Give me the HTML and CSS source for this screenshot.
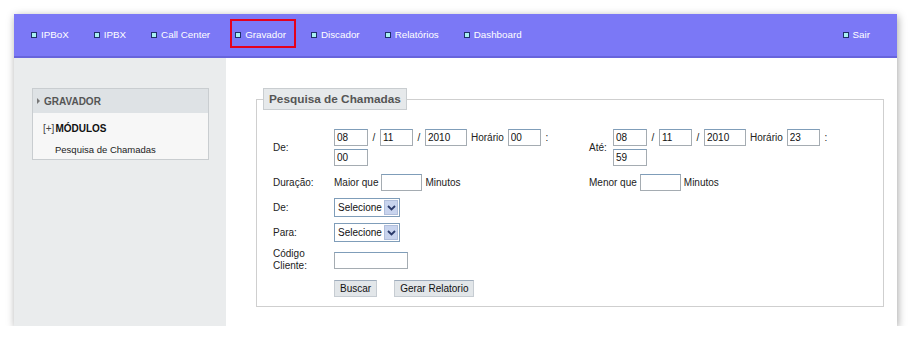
FILE: index.html
```html
<!DOCTYPE html>
<html lang="pt-BR">
<head>
    <meta charset="UTF-8">
    <link rel="stylesheet" href="styles.css">
</head>
<body>
    <div class="page">
        <div class="window">
            <nav class="topbar">
                <a class="nav-item"><span class="bullet"></span>IPBoX</a>
                <a class="nav-item"><span class="bullet"></span>IPBX</a>
                <a class="nav-item"><span class="bullet"></span>Call Center</a>
                <a class="nav-item active"><span class="bullet"></span>Gravador</a>
                <a class="nav-item"><span class="bullet"></span>Discador</a>
                <a class="nav-item"><span class="bullet"></span>Relatórios</a>
                <a class="nav-item"><span class="bullet"></span>Dashboard</a>
                <a class="nav-item nav-exit"><span class="bullet"></span>Sair</a>
            </nav>
            <div class="main">
                <aside class="sidebar">
                    <div class="side-box">
                        <div class="side-head"><span class="arrow"></span>GRAVADOR</div>
                        <div class="side-body">
                            <div class="side-group"><span class="plus">[+]</span>MÓDULOS</div>
                            <a class="side-link">Pesquisa de Chamadas</a>
                        </div>
                    </div>
                </aside>
                <section class="content">
                    <fieldset class="search">
                        <legend>Pesquisa de Chamadas</legend>

                        <div class="row row-date">
                            <div class="half">
                                <label class="lbl">De:</label>
                                <div class="fields">
                                    <input class="in w34" value="08"><span class="sep">/</span>
                                    <input class="in w32" value="11"><span class="sep">/</span>
                                    <input class="in w40" value="2010"><span class="txt">Horário</span>
                                    <input class="in w32" value="00"><span class="sep">:</span>
                                    <input class="in w34" value="00">
                                </div>
                            </div>
                            <div class="half half-right">
                                <label class="lbl lbl-short">Até:</label>
                                <div class="fields">
                                    <input class="in w34" value="08"><span class="sep">/</span>
                                    <input class="in w32" value="11"><span class="sep">/</span>
                                    <input class="in w40" value="2010"><span class="txt">Horário</span>
                                    <input class="in w32" value="23"><span class="sep">:</span>
                                    <input class="in w34" value="59">
                                </div>
                            </div>
                        </div>

                        <div class="row">
                            <div class="half">
                                <label class="lbl">Duração:</label>
                                <div class="fields fields-tight">
                                    <span class="txt">Maior que</span>
                                    <input class="in w41" value="">
                                    <span class="txt">Minutos</span>
                                </div>
                            </div>
                            <div class="half half-right">
                                <div class="fields fields-tight">
                                    <span class="txt">Menor que</span>
                                    <input class="in w41" value="">
                                    <span class="txt">Minutos</span>
                                </div>
                            </div>
                        </div>

                        <div class="row row-select">
                            <label class="lbl">De:</label>
                            <div class="select-wrap">
                                <select class="sel"><option>Selecione</option></select>
                                <span class="sel-btn">
                                    <svg width="9" height="6" viewBox="0 0 9 6"><path d="M1 1 L4.5 4.5 L8 1" fill="none" stroke="#2a3a6a" stroke-width="1.8"/></svg>
                                </span>
                            </div>
                        </div>

                        <div class="row row-select">
                            <label class="lbl">Para:</label>
                            <div class="select-wrap">
                                <select class="sel"><option>Selecione</option></select>
                                <span class="sel-btn">
                                    <svg width="9" height="6" viewBox="0 0 9 6"><path d="M1 1 L4.5 4.5 L8 1" fill="none" stroke="#2a3a6a" stroke-width="1.8"/></svg>
                                </span>
                            </div>
                        </div>

                        <div class="row row-code">
                            <label class="lbl lbl-wrap">Código Cliente:</label>
                            <input class="in w74" value="">
                        </div>

                        <div class="row row-buttons">
                            <button class="btn">Buscar</button>
                            <button class="btn">Gerar Relatorio</button>
                        </div>
                    </fieldset>
                </section>
            </div>
        </div>
    </div>
</body>
</html>
```

FILE: styles.css
```css
html, body {
    margin: 0;
    padding: 0;
    background: #ffffff;
    font-family: 'Liberation Sans', Arial, sans-serif;
    font-size: 10px;
    color: #222;
}

.page {
    padding: 14px 0 0 14px;
}

.window {
    width: 883px;
    height: 312px;
    display: flex;
    flex-direction: column;
    background: #fff;
    box-shadow: 1px 2px 8px rgba(0, 0, 0, 0.35);
}

/* barra superior */
.topbar {
    display: flex;
    align-items: flex-start;
    gap: 10px;
    height: 37px;
    flex-shrink: 0;
    padding: 5px 17px 0 12px;
    background: #7b78f6;
    border-bottom: 2px solid #6764dc;
}

.nav-item {
    display: flex;
    align-items: center;
    height: 23px;
    padding: 2px 8px 0 3px;
    border: 2px solid transparent;
    color: #fff;
    font-size: 9.8px;
    text-decoration: none;
    white-space: nowrap;
}

.nav-item.active {
    border-color: #e5001c;
}

.nav-exit {
    margin-left: auto;
}

.bullet {
    width: 4px;
    height: 4px;
    margin-right: 4px;
    background: #a8f0f0;
    border: 1px solid #1f2f6a;
}

/* menu lateral */
.main {
    flex: 1;
    display: flex;
}

.sidebar {
    width: 194px;
    flex-shrink: 0;
    padding: 30px 0 0 18px;
    background: #eaeced;
}

.side-box {
    width: 175px;
    border: 1px solid #c9cdd0;
    background: #f7f7f7;
}

.side-head {
    display: flex;
    align-items: center;
    height: 24px;
    padding-left: 4px;
    background: #dee2e5;
    color: #555;
    font-weight: bold;
    font-size: 10px;
}

.arrow {
    width: 0;
    height: 0;
    margin-right: 4px;
    border-left: 3px solid #777;
    border-top: 3px solid transparent;
    border-bottom: 3px solid transparent;
}

.side-body {
    padding: 8px 0 4px 10px;
}

.side-group {
    font-weight: bold;
    color: #111;
    height: 16px;
    line-height: 16px;
}

.plus {
    font-weight: normal;
    color: #444;
    margin-right: 1px;
}

.side-link {
    display: block;
    padding: 7px 0 0 12px;
    font-size: 9.5px;
    color: #222;
}

/* conteúdo */
.content {
    flex: 1;
    min-width: 0;
    padding: 30px 13px 0 30px;
}

.search {
    margin: 0;
    min-width: 0;
    padding: 19px 16px 9px 16px;
    border: 1px solid #cfcfcf;
}

.search legend {
    margin-left: -10px;
    padding: 0 5px;
    height: 20px;
    line-height: 20px;
    background: #e6e9eb;
    border: 1px solid #c9cdd0;
    color: #555;
    font-size: 11.8px;
    font-weight: bold;
}

.row {
    display: flex;
    align-items: center;
    margin-bottom: 7px;
}

.half {
    display: flex;
    align-items: center;
    width: 316px;
}

.half-right {
    width: auto;
    flex: 1;
}

.lbl {
    width: 61px;
    flex-shrink: 0;
}

.lbl-short {
    width: 24px;
}

.lbl-wrap {
    line-height: 12px;
}

.fields {
    display: flex;
    flex-wrap: wrap;
    align-items: center;
    column-gap: 4px;
    row-gap: 3px;
    width: 225px;
}

.fields-tight {
    column-gap: 3px;
}

.sep {
    width: 4px;
    text-align: center;
}

.txt {
    white-space: nowrap;
}

.in {
    height: 17px;
    box-sizing: border-box;
    padding: 0 2px;
    border: 1px solid #a5acb2;
    border-top-color: #7f9db9;
    font-family: 'Liberation Sans', Arial, sans-serif;
    font-size: 10px;
    color: #111;
    background: #fff;
}

.w32 { width: 33px; }
.w34 { width: 34px; }
.w40 { width: 42px; }
.w41 { width: 41px; }
.w74 { width: 74px; }

.row-date {
    margin-bottom: 8px;
}

.row-select {
    margin-bottom: 6px;
}

.select-wrap {
    position: relative;
    width: 66px;
    height: 19px;
}

.sel {
    appearance: none;
    width: 66px;
    height: 19px;
    padding: 0 0 0 3px;
    border: 1px solid #7f9db9;
    background: #fff;
    font-family: 'Liberation Sans', Arial, sans-serif;
    font-size: 10px;
    color: #111;
}

.sel-btn {
    position: absolute;
    top: 2px;
    right: 2px;
    width: 14px;
    height: 15px;
    display: flex;
    align-items: center;
    justify-content: center;
    background: #c8d4ee;
    border: 1px solid #b0bedb;
    box-sizing: border-box;
}

.row-code {
    margin-bottom: 8px;
}

.row-buttons {
    padding-left: 61px;
    gap: 17px;
    margin-bottom: 0;
}

.btn {
    height: 17px;
    padding: 0 5px;
    background: #e2e6e9;
    border: 1px solid #c6ccd2;
    border-top-color: #9eacbc;
    font-family: 'Liberation Sans', Arial, sans-serif;
    font-size: 10px;
    color: #111;
}
```
